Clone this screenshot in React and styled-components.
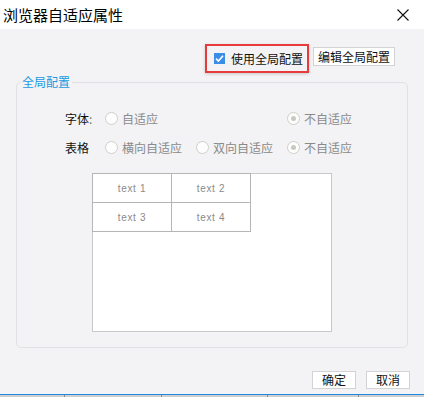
import React from "react";
import styled, { createGlobalStyle } from "styled-components";

const Global = createGlobalStyle`
  html, body { margin: 0; padding: 0; }
  body {
    width: 424px;
    height: 397px;
    overflow: hidden;
    background: #fff;
    font-family: "Noto Sans CJK SC", "Liberation Sans", sans-serif;
    font-size: 12px;
    color: #111;
  }
  * { box-sizing: border-box; }
`;

const Window = styled.div`
  display: flex;
  flex-direction: column;
  width: 424px;
  height: 397px;
`;

const TitleBar = styled.div`
  height: 29px;
  flex: none;
  display: flex;
  align-items: center;
  justify-content: space-between;
  padding: 0 15px 0 3px;
  background: #fff;
  font-size: 15px;
  line-height: 1;
  color: #000;
`;

const Body = styled.div`
  flex: 1;
  display: flex;
  flex-direction: column;
  background: #f3f3f5;
  padding-top: 15px;
`;

const Toolbar = styled.div`
  display: flex;
  justify-content: flex-end;
  align-items: flex-start;
  gap: 4px;
  padding-right: 29px;
  height: 29px;
`;

const Highlight = styled.label`
  height: 29px;
  display: flex;
  align-items: center;
  gap: 6px;
  padding: 0 4px 0 7px;
  border: 2px solid #e8393d;
  box-shadow: 0 1px 3px rgba(0, 0, 0, 0.18);
  line-height: 1;
  color: #111;
`;

const Button = styled.button`
  margin-top: ${(p) => p.$offset || 0}px;
  width: ${(p) => p.$w}px;
  height: ${(p) => p.$h}px;
  padding: 0;
  border: 1px solid #d3d3d3;
  background: #fff;
  font-family: "Noto Sans CJK SC", "Liberation Sans", sans-serif;
  font-size: 12px;
  line-height: 1;
  color: #111;
`;

const Fieldset = styled.fieldset`
  margin: 1px 16px 0;
  padding: 14px 0 15px;
  border: 1px solid #e1e1e5;
  border-radius: 5px;
  min-width: 0;
`;

const Legend = styled.legend`
  margin-left: 3px;
  padding: 0 2px;
  font-size: 12px;
  line-height: 16px;
  color: #1a9be0;
`;

const Content = styled.div`
  padding-left: 48px;
`;

const OptionGrid = styled.div`
  display: grid;
  grid-template-columns: 40px 91px 91px auto;
  grid-auto-rows: 29px;
  align-items: center;
`;

const RowLabel = styled.span`
  color: #111;
  line-height: 1;
`;

const Colon = styled.span`
  color: #777;
`;

const Option = styled.span`
  display: flex;
  align-items: center;
  gap: 4px;
  color: #8a8a8a;
  line-height: 1;
`;

const Radio = styled.span`
  width: 13px;
  height: 13px;
  border-radius: 50%;
  border: 1px solid #cfcfc7;
  background: #fdfdfd;
  display: grid;
  place-items: center;
  &::after {
    content: "";
    width: 5px;
    height: 5px;
    border-radius: 50%;
    background: ${(p) => (p.$checked ? "#c9c9c1" : "transparent")};
  }
`;

const TableBox = styled.div`
  margin: 11px 0 0 27px;
  width: 240px;
  height: 159px;
  border: 1px solid #c8c8c8;
  background: #fff;
`;

const Table = styled.div`
  margin: -1px 0 0 -1px;
  width: fit-content;
  display: grid;
  grid-template-columns: repeat(2, 79px);
  grid-auto-rows: 29px;
  border-top: 1px solid #b5b5b5;
  border-left: 1px solid #b5b5b5;
`;

const Cell = styled.div`
  border-right: 1px solid #b5b5b5;
  border-bottom: 1px solid #b5b5b5;
  display: flex;
  align-items: center;
  justify-content: center;
  font-family: "Liberation Sans", sans-serif;
  font-size: 10px;
  letter-spacing: 0.7px;
  color: #8a8a8a;
`;

const Footer = styled.div`
  display: flex;
  justify-content: flex-end;
  gap: 10px;
  padding-right: 14px;
  margin-top: 23px;
`;

const BlueLine = styled.div`
  height: 1px;
  flex: none;
  background: #1e88e5;
`;

const Strip = styled.div`
  height: 2px;
  flex: none;
  display: flex;
  background: #cfcfcf;
`;

const StripCell = styled.div`
  width: ${(p) => p.$w}px;
  flex: ${(p) => (p.$w ? "none" : 1)};
  border-left: ${(p) => (p.$first ? "none" : "1px solid #8c8c8c")};
`;

const CloseIcon = () => (
  <svg width="12" height="12" viewBox="0 0 12 12">
    <path d="M0.5 0.5 L11.5 11.5 M11.5 0.5 L0.5 11.5" stroke="#111" strokeWidth="1.1" fill="none" />
  </svg>
);

const CheckIcon = () => (
  <svg width="11" height="11" viewBox="0 0 11 11">
    <rect x="0" y="0" width="11" height="11" fill="#3a8ee6" />
    <path d="M2 5.6 L4.4 8 L9 2.8" stroke="#fff" strokeWidth="1.6" fill="none" />
  </svg>
);

const Opt = ({ checked, children }) => (
  <Option>
    <Radio $checked={checked} />
    {children}
  </Option>
);

export default function App() {
  return (
    <>
      <Global />
      <Window>
        <TitleBar>
          <span>浏览器自适应属性</span>
          <CloseIcon />
        </TitleBar>
        <Body>
          <Toolbar>
            <Highlight>
              <CheckIcon />
              <span>使用全局配置</span>
            </Highlight>
            <Button $w={82} $h={19} $offset={3}>编辑全局配置</Button>
          </Toolbar>
          <Fieldset>
            <Legend>全局配置</Legend>
            <Content>
              <OptionGrid>
                <RowLabel>
                  字体<Colon>:</Colon>
                </RowLabel>
                <Opt>自适应</Opt>
                <span />
                <Opt checked>不自适应</Opt>
                <RowLabel>表格</RowLabel>
                <Opt>横向自适应</Opt>
                <Opt>双向自适应</Opt>
                <Opt checked>不自适应</Opt>
              </OptionGrid>
              <TableBox>
                <Table>
                  <Cell>text 1</Cell>
                  <Cell>text 2</Cell>
                  <Cell>text 3</Cell>
                  <Cell>text 4</Cell>
                </Table>
              </TableBox>
            </Content>
          </Fieldset>
          <Footer>
            <Button $w={44} $h={18}>确定</Button>
            <Button $w={44} $h={18}>取消</Button>
          </Footer>
        </Body>
        <BlueLine />
        <Strip>
          <StripCell $w={64} $first />
          <StripCell $w={97} />
          <StripCell $w={106} />
          <StripCell $w={91} />
          <StripCell />
        </Strip>
      </Window>
    </>
  );
}
